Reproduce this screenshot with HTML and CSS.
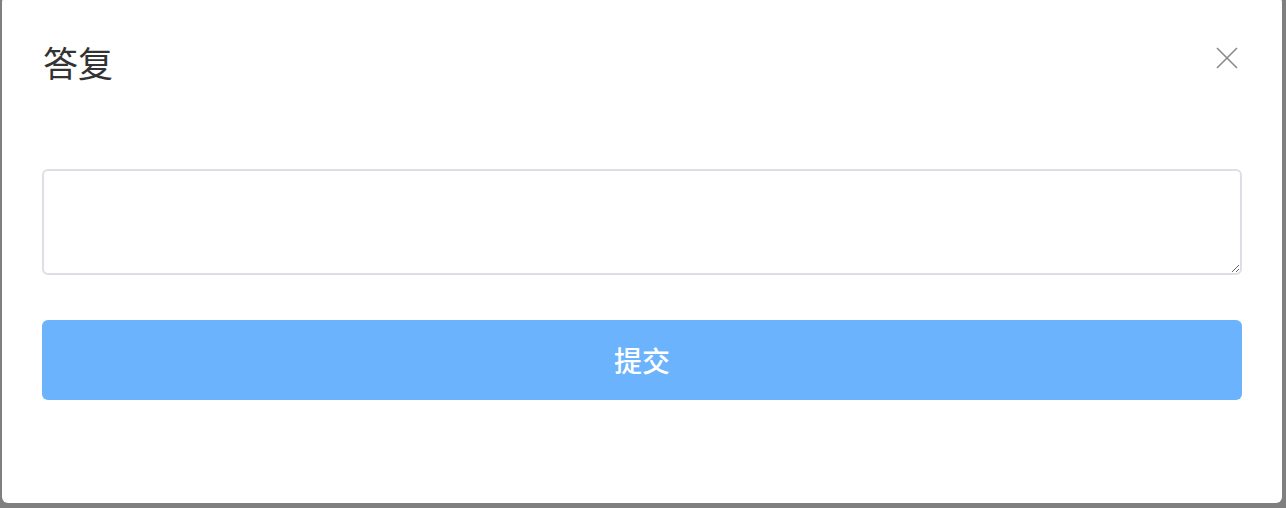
FILE: index.html
```
<!DOCTYPE html>
<html lang="zh-CN">
<head>
    <meta charset="UTF-8">
    <meta name="viewport" content="width=device-width, initial-scale=1.0">
    <title>答复</title>

    <link rel="stylesheet" href="styles.css">
</head>
<body>

    <div class="overlay">
        <div class="dialog">
            <div class="dialogHeader">
                <span class="dialogTitle">答复</span>
                <button class="closeButton" aria-label="关闭">
                    <svg width="22" height="22" viewBox="0 0 22 22">
                        <path d="M1 1 L21 21 M21 1 L1 21" stroke="#8a8a8a" stroke-width="1.6" fill="none"/>
                    </svg>
                </button>
            </div>

            <textarea class="replyInput"></textarea>

            <button class="submitButton">提交</button>
        </div>
    </div>

</body>
</html>
```

FILE: styles.css
```
body {
    font-family: "Noto Sans CJK SC", "Noto Sans", sans-serif;
    margin: 0;
    background-color: white;
    color: #303133;
    height: 100vh;
    overflow: hidden;
}

.overlay {
    position: fixed;
    top: 0;
    left: 0;
    right: 0;
    bottom: 0;
    background-color: rgba(0, 0, 0, 0.5);
}

.dialog {
    position: absolute;
    top: -4px;
    left: 2px;
    width: 1280px;
    height: 507px;
    background-color: white;
    border-radius: 6px;
    padding: 40px 40px 0 40px;
    box-sizing: border-box;
    display: flex;
    flex-direction: column;
}

.dialogHeader {
    display: flex;
    justify-content: space-between;
    align-items: center;
}

.dialogTitle {
    font-size: 35px;
    line-height: 51px;
    color: #333;
    margin-left: 1px;
}

.closeButton {
    background: none;
    border: none;
    padding: 0;
    margin: 0 4px 8px 0;
    width: 22px;
    height: 22px;
    cursor: pointer;
}

.closeButton svg {
    display: block;
}

.replyInput {
    display: block;
    margin-top: 82px;
    height: 106px;
    width: 100%;
    box-sizing: border-box;
    border: 2px solid #dcdfe6;
    border-radius: 6px;
    padding: 8px 12px;
    font-family: inherit;
    font-size: 18px;
    resize: vertical;
    outline: none;
}

.submitButton {
    margin-top: 45px;
    height: 80px;
    width: 100%;
    border: none;
    border-radius: 6px;
    background-color: #6bb3fd;
    color: white;
    font-family: inherit;
    font-size: 28px;
    font-weight: 500;
    cursor: pointer;
}
```
